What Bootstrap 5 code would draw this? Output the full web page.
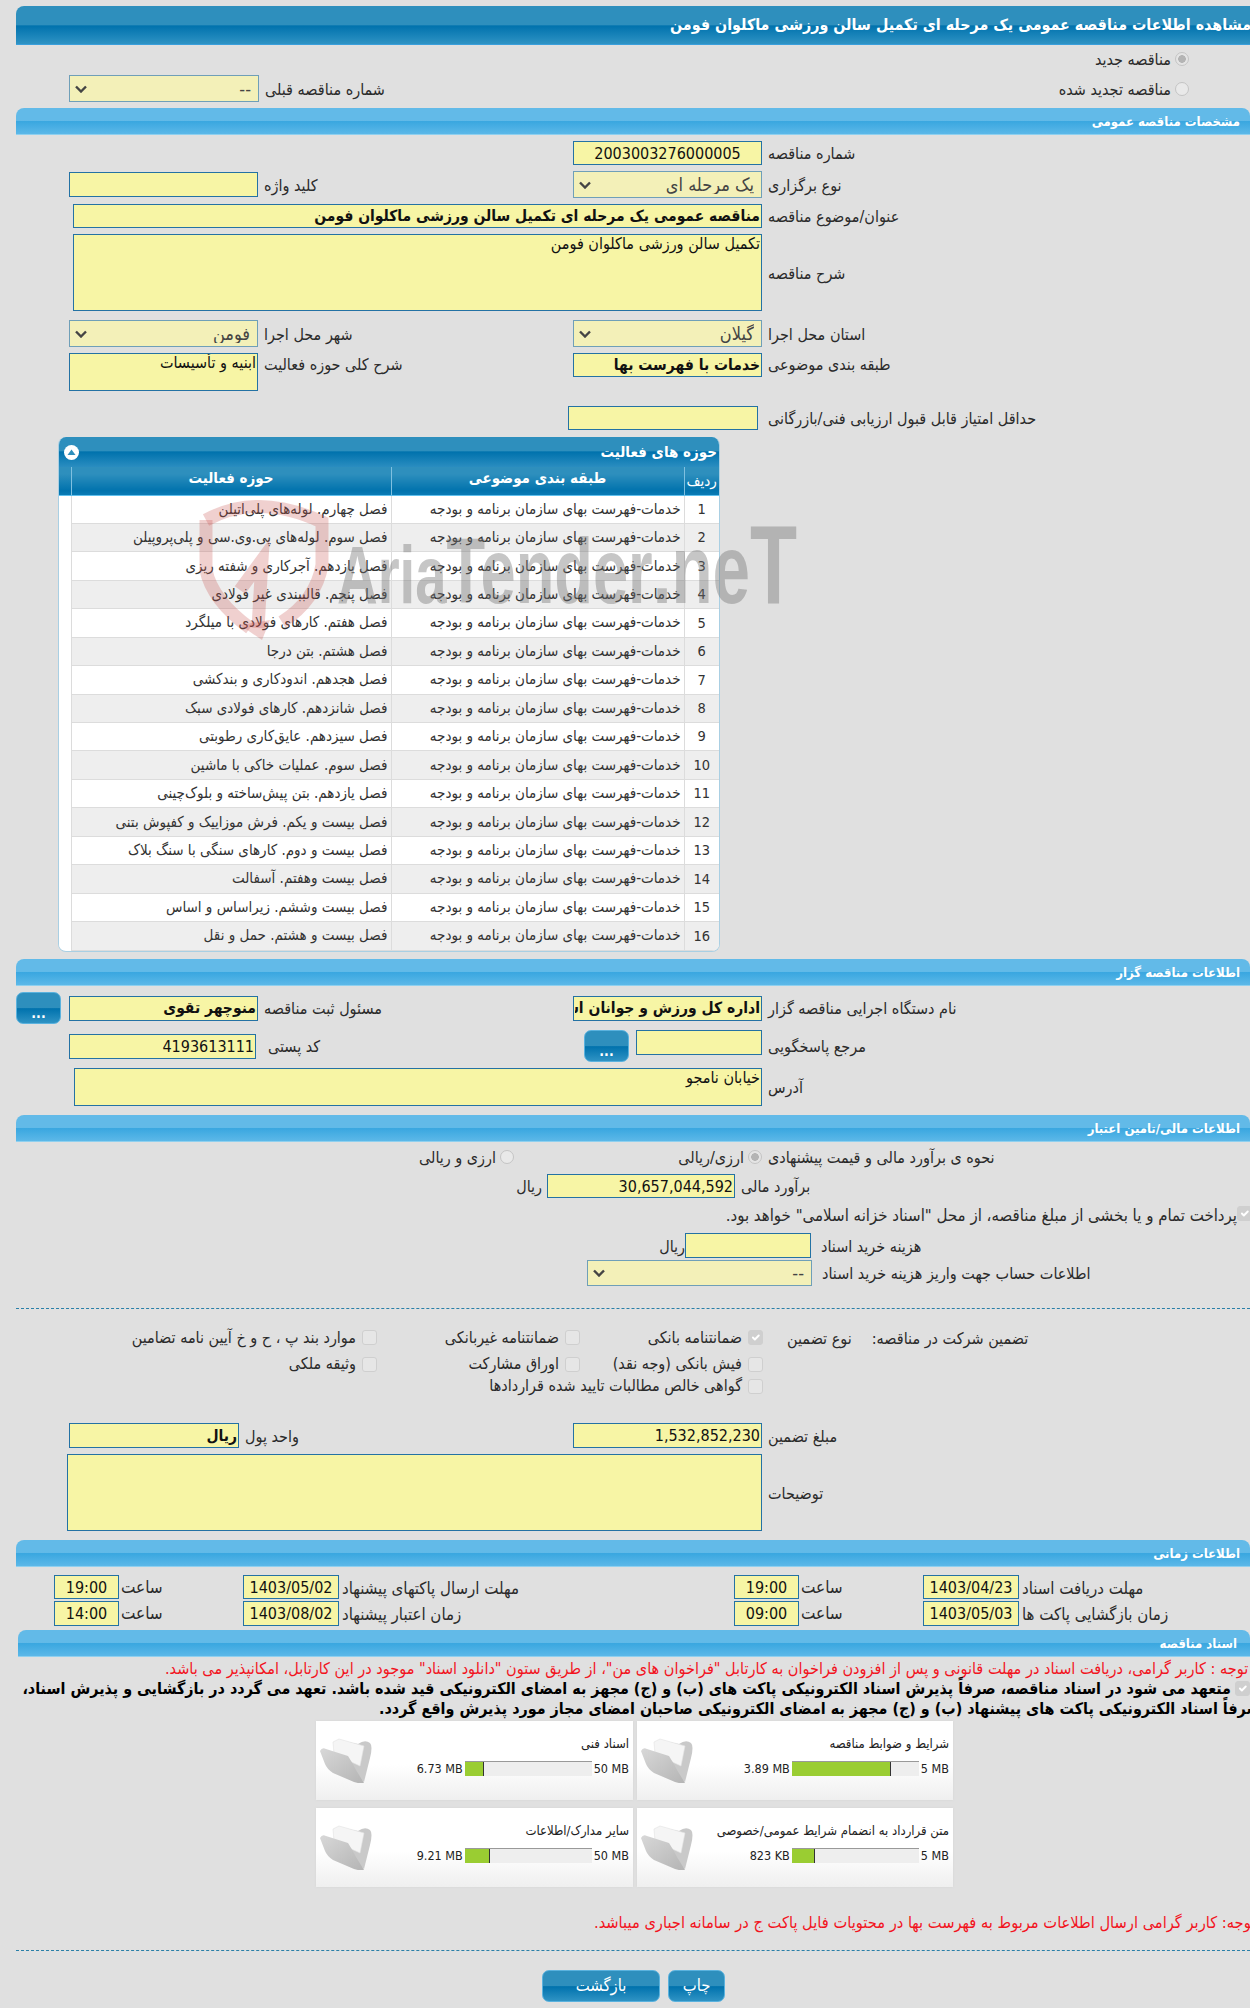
<!DOCTYPE html>
<html lang="fa" dir="ltr">
<head>
<meta charset="utf-8">
<title>مشاهده اطلاعات مناقصه</title>
<link href="https://cdn.jsdelivr.net/npm/bootstrap@5.3.0/dist/css/bootstrap.min.css" rel="stylesheet">
<style>
html,body{margin:0;background:#e0e0e0;height:2008px;overflow:hidden}
body{font-family:"DejaVu Sans Condensed","DejaVu Sans",sans-serif;font-size:16px;color:#222;line-height:1.2}
.sheet{width:1250px;height:2008px;overflow:hidden;position:relative;padding-top:6px;background:#e0e0e0}
.fa{direction:rtl}
.titlebar{margin-left:16px;width:1234px;height:39px;border-radius:8px 0 0 0;background:linear-gradient(#2e8fbd 0,#2e8fbd 50%,#0072ad 52%,#2f93c4 100%);border-bottom:1px solid #3a9fdc;color:#fff;font-weight:700;font-size:15.9px;display:flex;align-items:center;padding-left:654px;white-space:nowrap}
.secbar{margin-left:16px;width:1234px;height:27px;border-radius:8px 8px 0 0;background:linear-gradient(#62bae8 0,#62bae8 48%,#3aa7e0 52%,#5cb8e8 100%);border-bottom:1px solid #8fd0ef;color:#fff;font-weight:700;font-size:13px;display:flex;justify-content:flex-end;align-items:center;padding-right:10px;padding-top:2px}
.secbar.narrow{margin-left:18px;width:1232px;padding-right:13px}
.frow{display:flex;align-items:center}
.lc{width:573px;padding-left:69px;display:flex;align-items:center;flex:none}
.rc{display:flex;align-items:center;flex:none}
.fld{font-size:16px;white-space:nowrap;direction:rtl;color:#2b2b2b;padding-top:2px}
.form-control.inp,.form-select.sel{border-radius:0;padding:0 1px;font-size:16px;line-height:1.1;color:#111;box-shadow:none;min-height:0;height:100%;flex:none;font-family:inherit}
.form-control.inp{background:#f7f5a5;border:1px solid #2472a4;opacity:1}
.form-select.sel{background-color:#f3f0b8;border:1px solid #6f9fb8;color:#444;direction:rtl;padding:0 7px;background-image:url("data:image/svg+xml,%3csvg xmlns='http://www.w3.org/2000/svg' viewBox='0 0 12 8'%3e%3cpath fill='none' stroke='%23444' stroke-width='2.4' d='M1 1.5l5 5 5-5'/%3e%3c/svg%3e");background-position:left 5px center;background-size:12px 8px;font-size:18px;opacity:1}
.form-control.big{font-weight:700;font-size:15.5px;direction:rtl}
.form-control.num{font-size:16px;text-align:center;direction:ltr}
.form-control.numr{font-size:16px;text-align:right;direction:ltr}
textarea.form-control.inp{resize:none;min-height:0;direction:rtl}
.w189{width:189px}.w190{width:190px}.w187{width:187px}.w170{width:170px}.w126{width:126px}.w188{width:188px}.w225{width:225px}.w96{width:96px}.w65{width:65px}.w689{width:689px}.w688{width:688px}.w695{width:695px}
.gl{margin-left:6px}.gm{margin-left:10px}.gw{margin-left:12px}
.h24{height:24px}.h25{height:25px}.h26{height:26px}.h27{height:27px}.h28{height:28px}.h32{height:32px}.h38{height:38px}.h77{height:77px}.h20{height:20px}.h22{height:22px}.h30{height:30px}
.mt2{margin-top:2px}.mt4{margin-top:4px}.mt5{margin-top:5px}.mt6{margin-top:6px}.mt7{margin-top:7px}.mt8{margin-top:8px}.mt9{margin-top:9px}.mt15{margin-top:15px}.mt17{margin-top:17px}.mt18{margin-top:18px}.mt19{margin-top:19px}.mt22{margin-top:22px}.mt26{margin-top:26px}.mt27{margin-top:27px}
.shift-a{padding-left:73px}.shift-b{padding-left:74px}.shift-c{padding-left:67px}
.topalign{align-items:flex-start}
.lbl-six{margin-top:5px}
.fullh{height:100%}
.form-check-input.radio-g{width:14px;height:14px;margin:0;flex:none;opacity:1;background-color:#e9e9e9;border-color:#c4c4c4}
.form-check-input.radio-g:checked{background-image:radial-gradient(circle,#b4b4b4 0,#b4b4b4 42%,transparent 48%);background-color:#e4e4e4;border-color:#c4c4c4}
.form-check-input.chk-g{width:15px;height:15px;margin:0;flex:none;opacity:1;background-color:#e6e6e6;border-color:#cfcfcf;border-radius:3px}
.form-check-input.chk-g:checked{background-color:#cfcfcf;border-color:#cfcfcf}
.panel-box{margin-left:58px;width:662px;height:515px;border-radius:8px;overflow:hidden;background:#fff;border:1px solid #a9cfe3;border-top:0}
.panel-title{height:30px;display:flex;align-items:center;justify-content:space-between;padding:0 2px 0 5px;font-weight:700;font-size:15px;color:#fff;background:linear-gradient(#2e8fbd 0,#2e8fbd 45%,#0072ad 50%,#2a8dc0 100%)}
.collapse-dot{width:15px;height:15px;border-radius:50%;background:#fff;display:flex;align-items:center;justify-content:center;flex:none}
table.table.acts{table-layout:fixed;width:660px;margin:0;border-collapse:collapse;font-size:15px;direction:ltr;--bs-table-bg:transparent}
.acts th{background:linear-gradient(#2e8fbd 0,#2e8fbd 25%,#0072ad 85%,#0a7bb5 100%);color:#fff;font-weight:700;font-size:15px;text-align:center;height:28px;padding:0 0 5px;border:0;border-left:1px solid #7fc0e0;border-bottom:1px solid #5fc0ee;vertical-align:middle;direction:rtl;white-space:nowrap}
.acts th:first-child{border-left:0}
.acts th.narrow-th{font-size:15px;font-weight:400;overflow:visible;padding:0}
.acts td{padding:0 3px;border:0;border-left:1px solid #dcdcdc;border-bottom:1px solid #dcdcdc;direction:rtl;text-align:right;color:#333;vertical-align:middle;white-space:nowrap;overflow:hidden;height:28.45px;background:#fff;line-height:1}
.acts tr.alt td{background:#eeeeee}
.acts tr td:first-child{background:#fff;border-left:0;border-bottom:0}
.acts td.idx{text-align:center;font-size:14.5px}
.c0{width:12px}.c1{width:320px}.c2{width:293px}.c3{width:35px}
.btn.gbtn{background:linear-gradient(#2e8fbd 0,#2e8fbd 50%,#0072ad 52%,#2f93c4 100%);border:1px solid #5ab2de;border-radius:7px;color:#fff;padding:0;font-size:16.5px;line-height:1;flex:none}
.btn.gbtn:hover{color:#fff}
.btn.gbtn.dotsb{font-weight:700;font-size:14px;padding-top:10px}
.b45{width:45px;height:32px}
.b118{width:118px;height:32px}.b57{width:57px;height:32px}
.mr8{margin-right:8px}.mr7{margin-right:7px}
.rial{width:28px;flex:none;padding-right:5px}
.rial-tight{width:23px;flex:none}
.dashline{height:0;border:0;border-top:1px dashed #2a7fa8;opacity:1;margin-left:16px;margin-bottom:0;width:1234px}
.guar{display:grid;grid-template-columns:277px 203px 183px auto auto;justify-content:start;padding-left:100px;align-items:center}
.gcell{display:flex;direction:rtl;align-items:center;gap:6px;white-space:nowrap;font-size:16px;color:#2b2b2b}
.gap-a{margin-left:24px}.gap-b{margin-left:20px}
.redline{color:#f2141e;font-size:16.3px;white-space:nowrap;direction:rtl}
.redline.first-note{font-size:16.1px}
.boldline{color:#000;font-weight:700;font-size:15.95px;white-space:nowrap;direction:rtl}
.filebox{height:79px;background:linear-gradient(#fff 0,#fff 55%,#efefef 100%);box-shadow:0 0 2px #d4d4d4;display:flex;flex:none;padding:17px 4px 0}
.fb-l{width:317px}.fb-r{width:316px}
.fold{width:52px;height:45px;flex:none}
.fb-main{flex:1;display:flex;flex-direction:column;min-width:0}
.fb-title{direction:rtl;font-size:13px;height:15px;line-height:12px;white-space:nowrap;color:#222}
.pgrow{display:flex;justify-content:flex-end;align-items:center;gap:2px;margin-top:8px;font-size:12.5px;color:#222;height:15px}
.progress.pbar{width:127px;height:15px;border-radius:0;background:#eee;border-top:1px solid #999;flex:none}
.progress-bar.pfill{background:#9acd32;border-right:1px solid #333}
.p78{width:78%}.p15{width:15%}.p18{width:18%}.p20{width:20%}
.overlay{position:absolute;left:0;top:0;width:1250px;height:2008px;pointer-events:none}
.pl16{padding-left:16px}.pl11{padding-left:11px}
.pl519{padding-left:519px}.pl662{padding-left:662px}.pl587{padding-left:587px}
.pl165{padding-left:165px}.pl379{padding-left:379px}.pl594{padding-left:594px}.pl316{padding-left:316px}.pl542{padding-left:542px}
.gap4{gap:4px}.gap8{gap:8px}
.end-row{justify-content:flex-end}
.pr61{padding-right:61px}
.left-time{width:734px;padding-left:54px;display:flex;align-items:center;flex:none;height:100%}
.rcfull{display:flex;align-items:center;height:100%}
.saat{width:124px;padding-left:2px;flex:none;font-size:17px;color:#2b2b2b}
.saat span{display:inline-block;direction:rtl}
.radgrid{display:grid;grid-template-columns:93px 248px auto;justify-content:start;padding-left:421px;align-items:center}
.radcell{display:flex;direction:rtl;align-items:center;gap:4px}
.cbx-r{margin-right:-2px}
.fld.wide{font-size:16.7px}
.fld.tlabel{font-size:16.7px}
.sh3{margin-left:3px}
.mini-a{margin-left:-5px}
.lab7{margin-left:6px}
.foot-line{height:1px;background:#fff;margin:6px 0 0 11px}
</style>
</head>
<body>
<div class="sheet">
<div class="titlebar"><span class="fa">مشاهده اطلاعات مناقصه عمومی یک مرحله ای تکمیل سالن ورزشی ماکلوان فومن</span></div>

<div class="frow end-row h28 pr61"><div class="d-flex align-items-center gap-1 fa"><input class="form-check-input radio-g" type="radio" checked disabled><span class="fld">مناقصه جدید</span></div></div>
<div class="frow h27 mt2"><div class="lc fullh"><select class="form-select sel w190" disabled><option>--</option></select><span class="fld gl">شماره مناقصه قبلی</span></div><div class="rc ms-auto pr61"><div class="d-flex align-items-center gap-1 fa"><input class="form-check-input radio-g" type="radio" disabled><span class="fld">مناقصه تجدید شده</span></div></div></div>

<div class="secbar mt6"><span class="fa">مشخصات مناقصه عمومی</span></div>
<div class="frow h24 mt6"><div class="lc"></div><div class="rc fullh"><input class="form-control inp num w189" value="2003003276000005" readonly><span class="fld gl">شماره مناقصه</span></div></div>
<div class="frow h27 mt6"><div class="lc h25"><input class="form-control inp w189" readonly><span class="fld gl">کلید واژه</span></div><div class="rc fullh"><select class="form-select sel w189" disabled><option>یک مرحله ای</option></select><span class="fld gl">نوع برگزاری</span></div></div>
<div class="frow h24 mt6 shift-a"><input class="form-control inp big w689" value="مناقصه عمومی یک مرحله ای تکمیل سالن ورزشی ماکلوان فومن" readonly><span class="fld gl">عنوان/موضوع مناقصه</span></div>
<div class="frow h77 mt6 shift-a"><textarea class="form-control inp w689" readonly>تکمیل سالن ورزشی ماکلوان فومن</textarea><span class="fld gl">شرح مناقصه</span></div>
<div class="frow h27 mt9"><div class="lc fullh"><select class="form-select sel w189" disabled><option>فومن</option></select><span class="fld gl">شهر محل اجرا</span></div><div class="rc fullh"><select class="form-select sel w189" disabled><option>گیلان</option></select><span class="fld gl">استان محل اجرا</span></div></div>
<div class="frow h38 mt6 topalign"><div class="lc fullh topalign"><textarea class="form-control inp w189" readonly>ابنیه و تأسیسات</textarea><span class="fld gl">شرح کلی حوزه فعالیت</span></div><div class="rc h24 topalign"><input class="form-control inp big w189" value="خدمات با فهرست بها" readonly><span class="fld gl">طبقه بندی موضوعی</span></div></div>
<div class="frow h24 mt15"><div class="lc"></div><div class="rc fullh mini-a"><input class="form-control inp w190" readonly><span class="fld gm">حداقل امتیاز قابل قبول ارزیابی فنی/بازرگانی</span></div></div>

<div class="card panel-box mt7">
  <div class="panel-title"><span class="collapse-dot"><svg width="9" height="7" viewBox="0 0 9 7"><path d="M4.5 0.5 L8.5 6 H0.5Z" fill="#2e8fbd"/></svg></span><span class="fa">حوزه های فعالیت</span></div>
  <table class="table acts">
   <colgroup><col class="c0"><col class="c1"><col class="c2"><col class="c3"></colgroup>
   <thead><tr><th></th><th>حوزه فعالیت</th><th>طبقه بندی موضوعی</th><th class="narrow-th">ردیف</th></tr></thead>
   <tbody>
   <tr><td></td><td>فصل چهارم. لوله‌های پلی‌اتیلن</td><td>خدمات-فهرست بهای سازمان برنامه و بودجه</td><td class="idx">1</td></tr>
   <tr class="alt"><td></td><td>فصل سوم. لوله‌های پی.وی.سی و پلی‌پروپیلن</td><td>خدمات-فهرست بهای سازمان برنامه و بودجه</td><td class="idx">2</td></tr>
   <tr><td></td><td>فصل یازدهم. آجرکاری و شفته ریزی</td><td>خدمات-فهرست بهای سازمان برنامه و بودجه</td><td class="idx">3</td></tr>
   <tr class="alt"><td></td><td>فصل پنجم. قالببندی غیر فولادی</td><td>خدمات-فهرست بهای سازمان برنامه و بودجه</td><td class="idx">4</td></tr>
   <tr><td></td><td>فصل هفتم. کارهای فولادی با میلگرد</td><td>خدمات-فهرست بهای سازمان برنامه و بودجه</td><td class="idx">5</td></tr>
   <tr class="alt"><td></td><td>فصل هشتم. بتن درجا</td><td>خدمات-فهرست بهای سازمان برنامه و بودجه</td><td class="idx">6</td></tr>
   <tr><td></td><td>فصل هجدهم. اندودکاری و بندکشی</td><td>خدمات-فهرست بهای سازمان برنامه و بودجه</td><td class="idx">7</td></tr>
   <tr class="alt"><td></td><td>فصل شانزدهم. کارهای فولادی سبک</td><td>خدمات-فهرست بهای سازمان برنامه و بودجه</td><td class="idx">8</td></tr>
   <tr><td></td><td>فصل سیزدهم. عایق‌کاری رطوبتی</td><td>خدمات-فهرست بهای سازمان برنامه و بودجه</td><td class="idx">9</td></tr>
   <tr class="alt"><td></td><td>فصل سوم. عملیات خاکی با ماشین</td><td>خدمات-فهرست بهای سازمان برنامه و بودجه</td><td class="idx">10</td></tr>
   <tr><td></td><td>فصل یازدهم. بتن پیش‌ساخته و بلوک‌چینی</td><td>خدمات-فهرست بهای سازمان برنامه و بودجه</td><td class="idx">11</td></tr>
   <tr class="alt"><td></td><td>فصل بیست و یکم. فرش موزاییک و کفپوش بتنی</td><td>خدمات-فهرست بهای سازمان برنامه و بودجه</td><td class="idx">12</td></tr>
   <tr><td></td><td>فصل بیست و دوم. کارهای سنگی با سنگ بلاک</td><td>خدمات-فهرست بهای سازمان برنامه و بودجه</td><td class="idx">13</td></tr>
   <tr class="alt"><td></td><td>فصل بیست وهفتم. آسفالت</td><td>خدمات-فهرست بهای سازمان برنامه و بودجه</td><td class="idx">14</td></tr>
   <tr><td></td><td>فصل بیست وششم. زیراساس و اساس</td><td>خدمات-فهرست بهای سازمان برنامه و بودجه</td><td class="idx">15</td></tr>
   <tr class="alt"><td></td><td>فصل بیست و هشتم. حمل و نقل</td><td>خدمات-فهرست بهای سازمان برنامه و بودجه</td><td class="idx">16</td></tr>
   </tbody>
  </table>
</div>

<div class="secbar mt7"><span class="fa">اطلاعات مناقصه گزار</span></div>
<div class="frow h32 mt6"><div class="lc fullh pl16"><button class="btn gbtn dotsb b45 mr8" type="button">...</button><div class="h25 d-flex"><input class="form-control inp big w189" value="منوچهر تقوی" readonly></div><span class="fld gl">مسئول ثبت مناقصه</span></div><div class="rc h25"><input class="form-control inp big w189" value="اداره کل ورزش و جوانان استان گیلان" readonly><span class="fld gl">نام دستگاه اجرایی مناقصه گزار</span></div></div>
<div class="frow h32 mt6 topalign"><div class="lc fullh"><div class="h25 d-flex"><input class="form-control inp numr w187" value="4193613111" readonly></div><span class="fld gw">کد پستی</span></div><div class="rc fullh topalign pl11"><button class="btn gbtn dotsb b45 mr7" type="button">...</button><div class="h25 d-flex"><input class="form-control inp w126" readonly></div><span class="fld gl lbl-six">مرجع پاسخگویی</span></div></div>
<div class="frow h38 mt6 shift-b"><textarea class="form-control inp w688" readonly>خیابان نامجو</textarea><span class="fld gl">آدرس</span></div>

<div class="secbar mt9"><span class="fa">اطلاعات مالی/تامین اعتبار</span></div>
<div class="radgrid h22 mt4"><div class="radcell"><input class="form-check-input radio-g" type="radio" disabled><span class="fld">ارزی و ریالی</span></div><div class="radcell"><input class="form-check-input radio-g" type="radio" checked disabled><span class="fld">ارزی/ریالی</span></div><span class="fld lab7">نحوه ی برآورد مالی و قیمت پیشنهادی</span></div>
<div class="frow h24 mt6 pl519"><span class="fld rial">ریال</span><input class="form-control inp numr w188" value="30,657,044,592" readonly><span class="fld gl">برآورد مالی</span></div>
<div class="frow h30 end-row"><div class="d-flex align-items-center fa cbx-r"><input class="form-check-input chk-g" type="checkbox" checked disabled><span class="fld wide pt-1">پرداخت تمام و یا بخشی از مبلغ مناقصه، از محل "اسناد خزانه اسلامی" خواهد بود.</span></div></div>
<div class="frow h25 mt5 pl662"><span class="fld rial-tight">ریال</span><input class="form-control inp w126" readonly><span class="fld gm">هزینه خرید اسناد</span></div>
<div class="frow h26 mt2 pl587"><select class="form-select sel w225" disabled><option>--</option></select><span class="fld gm">اطلاعات حساب جهت واریز هزینه خرید اسناد</span></div>
<hr class="dashline mt22">
<div class="guar h20 mt18"><div class="gcell"><input class="form-check-input chk-g" type="checkbox" disabled><span>موارد بند پ ، ح و خ آیین نامه تضامین</span></div><div class="gcell"><input class="form-check-input chk-g" type="checkbox" disabled><span>ضمانتنامه غیربانکی</span></div><div class="gcell"><input class="form-check-input chk-g" type="checkbox" checked disabled><span>ضمانتنامه بانکی</span></div><span class="fld gap-a">نوع تضمین</span><span class="fld gap-b">تضمین شرکت در مناقصه:</span></div>
<div class="guar h20 mt7"><div class="gcell sh3"><input class="form-check-input chk-g" type="checkbox" disabled><span>وثیقه ملکی</span></div><div class="gcell"><input class="form-check-input chk-g" type="checkbox" disabled><span>اوراق مشارکت</span></div><div class="gcell"><input class="form-check-input chk-g" type="checkbox" disabled><span>فیش بانکی (وجه نقد)</span></div></div>
<div class="guar h20 mt2"><div></div><div></div><div class="gcell"><input class="form-check-input chk-g" type="checkbox" disabled><span>گواهی خالص مطالبات تایید شده قراردادها</span></div></div>

<div class="frow h25 mt27"><div class="lc fullh"><input class="form-control inp big w170" value="ریال" readonly><span class="fld gl">واحد پول</span></div><div class="rc fullh"><input class="form-control inp numr w189" value="1,532,852,230" readonly><span class="fld gl">مبلغ تضمین</span></div></div>
<div class="frow h77 mt6 shift-c"><textarea class="form-control inp w695" readonly></textarea><span class="fld gl">توضیحات</span></div>

<div class="secbar mt9"><span class="fa">اطلاعات زمانی</span></div>
<div class="frow h24 mt8"><div class="left-time"><input class="form-control inp num w65" value="19:00" readonly><div class="saat"><span>ساعت</span></div><input class="form-control inp num w96" value="1403/05/02" readonly><span class="fld tlabel sh3">مهلت ارسال پاکتهای پیشنهاد</span></div><div class="rcfull"><input class="form-control inp num w65" value="19:00" readonly><div class="saat"><span>ساعت</span></div><input class="form-control inp num w96" value="1403/04/23" readonly><span class="fld tlabel sh3">مهلت دریافت اسناد</span></div></div>
<div class="frow h25 mt2"><div class="left-time"><input class="form-control inp num w65" value="14:00" readonly><div class="saat"><span>ساعت</span></div><input class="form-control inp num w96" value="1403/08/02" readonly><span class="fld tlabel sh3">زمان اعتبار پیشنهاد</span></div><div class="rcfull"><input class="form-control inp num w65" value="09:00" readonly><div class="saat"><span>ساعت</span></div><input class="form-control inp num w96" value="1403/05/03" readonly><span class="fld tlabel sh3">زمان بازگشایی پاکت ها</span></div></div>

<div class="secbar narrow mt4"><span class="fa">اسناد مناقصه</span></div>
<div class="frow h20 mt2 pl165"><span class="redline first-note">توجه : کاربر گرامی، دریافت اسناد در مهلت قانونی و پس از افزودن فراخوان به کارتابل "فراخوان های من"، از طریق ستون "دانلود اسناد" موجود در این کارتابل، امکانپذیر می باشد.</span></div>
<div class="frow h20 end-row"><div class="d-flex align-items-center gap-1 fa"><input class="form-check-input chk-g" type="checkbox" checked disabled><span class="boldline">متعهد می شود در اسناد مناقصه، صرفاً پذیرش اسناد الکترونیکی پاکت های (ب) و (ج) مجهز به امضای الکترونیکی قید شده باشد. تعهد می گردد در بازگشایی و پذیرش اسناد،</span></div></div>
<div class="frow h20 pl379"><span class="boldline">صرفاً اسناد الکترونیکی پاکت های پیشنهاد (ب) و (ج) مجهز به امضای الکترونیکی صاحبان امضای مجاز مورد پذیرش واقع گردد.</span></div>

<svg width="0" height="0" class="position-absolute"><defs>
<linearGradient id="fg" x1="0" y1="0" x2="1" y2="1"><stop offset="0" stop-color="#d8d8d8"/><stop offset="1" stop-color="#b4b4b4"/></linearGradient>
<symbol id="folder" viewBox="0 0 52 45"><path d="M17 2 L38 6 Q45 1 50 5 Q53 8 50 20 L44 44 L36 38Z" fill="#c9c9c9"/><path d="M13 4 L19 1 L44 8 L40 28 L14 16Z" fill="#f5f5f5" stroke="#e2e2e2" stroke-width=".6"/><path d="M0 13 Q2 9 6 11 L28 18 Q32 24 36 32 L44 45 Q40 46 34 44 L13 35 Q7 31 5 26Z" fill="url(#fg)"/></symbol>
</defs></svg>

<div class="frow mt2 pl316 gap4"><div class="filebox fb-l"><svg class="fold"><use href="#folder"/></svg><div class="fb-main"><div class="fb-title">اسناد فنی</div><div class="pgrow"><span>6.73 MB</span><div class="progress pbar"><div class="progress-bar pfill p15"></div></div><span>50 MB</span></div></div></div><div class="filebox fb-r"><svg class="fold"><use href="#folder"/></svg><div class="fb-main"><div class="fb-title">شرایط و ضوابط مناقصه</div><div class="pgrow"><span>3.89 MB</span><div class="progress pbar"><div class="progress-bar pfill p78"></div></div><span>5 MB</span></div></div></div></div>
<div class="frow mt8 pl316 gap4"><div class="filebox fb-l"><svg class="fold"><use href="#folder"/></svg><div class="fb-main"><div class="fb-title">سایر مدارک/اطلاعات</div><div class="pgrow"><span>9.21 MB</span><div class="progress pbar"><div class="progress-bar pfill p20"></div></div><span>50 MB</span></div></div></div><div class="filebox fb-r"><svg class="fold"><use href="#folder"/></svg><div class="fb-main"><div class="fb-title">متن قرارداد به انضمام شرایط عمومی/خصوصی</div><div class="pgrow"><span>823 KB</span><div class="progress pbar"><div class="progress-bar pfill p18"></div></div><span>5 MB</span></div></div></div></div>

<div class="frow h20 mt26 pl594"><span class="redline">توجه: کاربر گرامی ارسال اطلاعات مربوط به فهرست بها در محتویات فایل پاکت ج در سامانه اجباری میباشد.</span></div>
<hr class="dashline mt17">
<div class="frow mt19 pl542 gap8"><button class="btn gbtn b118" type="button">بازگشت</button><button class="btn gbtn b57" type="button">چاپ</button></div>
<div class="foot-line"></div>

<svg class="overlay" viewBox="0 0 1250 2008">
 <g fill="none" stroke="#c8504f" stroke-opacity=".27" stroke-width="13">
  <path d="M206 520 Q258 492 322 522 L322 565 Q316 600 282 622"/>
  <path d="M206 520 L206 570 Q212 600 250 628"/>
  <path d="M240 590 L262 560 L258 628"/>
 </g>
 <path d="M240 625 L270 620 L262 640Z" fill="#c8504f" fill-opacity=".27"/>
 <text x="337" y="603" font-family="Liberation Sans,sans-serif" font-weight="700" fill="#707070" fill-opacity=".4" textLength="460" lengthAdjust="spacingAndGlyphs"><tspan font-size="82">Aria</tspan><tspan font-size="92">Tender</tspan><tspan font-size="98">.ne</tspan><tspan font-size="112">T</tspan></text>
</svg>
</div>
</body>
</html>
